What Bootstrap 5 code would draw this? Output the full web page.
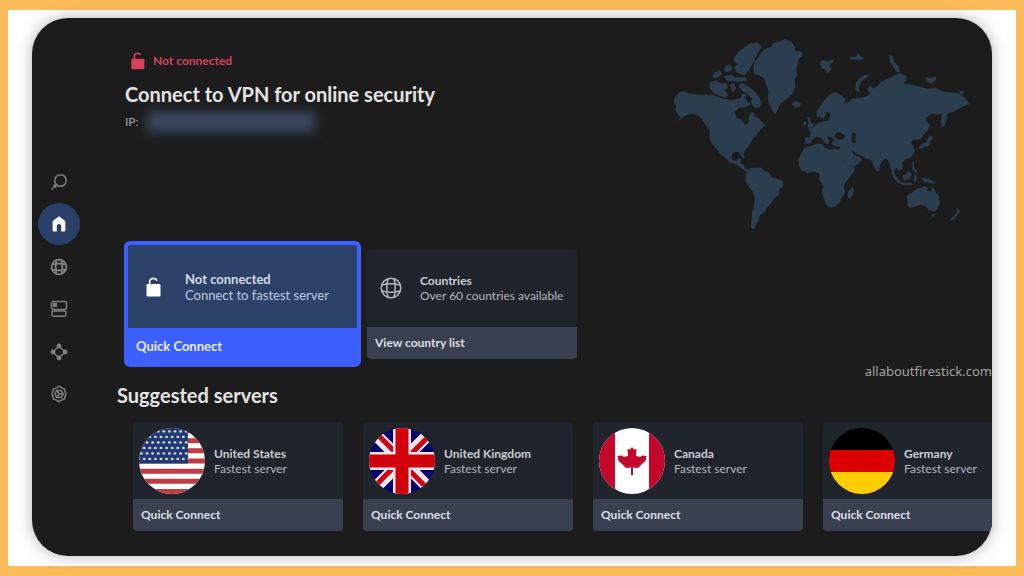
<!DOCTYPE html>
<html lang="en">
<head>
<meta charset="utf-8">
<meta name="viewport" content="width=device-width, initial-scale=1">
<title>VPN for TV</title>
<link href="https://cdn.jsdelivr.net/npm/bootstrap@5.3.0/dist/css/bootstrap.min.css" rel="stylesheet">
<style>
  body { font-family: Lato, "Open Sans", sans-serif; background: #fff; color: #e4e4e4; }
  .frame { min-height: 100vh; border: solid #fdbc59; border-width: 10px 8px; padding: 8px 24px 10px; background: #fff; }
  .panel { background: #1c1c1c; border-radius: 36px; box-shadow: 0 0 16px rgba(0,0,0,.3); }
  .rail { width: 54px; padding-top: 2px; }
  .rail-list { min-height: 254px; }
  .rail-link { width: 42px; height: 42px; color: #808080; }
  .rail-link.active { background: #2a4068; color: #fff; }
  .content { min-width: 0; padding-left: 31px; }
  .hero { padding: 20px 20px 10px 8px; }
  .hero-text { padding-top: 14px; }
  .status { color: #d8415a; font-size: 12px; line-height: 16px; padding-left: 6px; font-weight: 700; }
  .title { font-size: 20px; line-height: 24px; font-weight: 700; margin: 12px 0 6px; }
  .ip { font-size: 12px; line-height: 16px; color: #a5a5a5; }
  .ip-value { width: 168px; height: 20px; background: #3c4a63; filter: blur(6px); }
  .map { width: 300px; height: 193px; fill: #2a3e50; }
  .tile { width: 210px; background: #20242d; border-radius: 4px; font-size: 12px; line-height: 15px; color: #b3b6bc; }
  .tile-body { height: 77px; }
  .tile-title { color: #ccced2; font-weight: 700; }
  .tile-btn { height: 32px; border: 0; background: #394050; color: #dddfe4; font-size: 12px; font-weight: 700; line-height: 16px; padding: 0 8px; text-align: left; }
  .tile-selected { width: 237px; border: 4px solid #3e5fff; border-radius: 6px; background: #2c4269; font-size: 13px; line-height: 16px; color: #c0c9d9; }
  .tile-selected .tile-body { height: 83px; }
  .tile-selected .tile-title { color: #d3dae6; }
  .tile-selected .tile-btn { height: 35px; background: #3e5fff; font-size: 13px; color: #e6ebff; }
  .tile-selected .tile-icon { width: 57px; padding-left: 18px; }
  .tile-icon { width: 53px; padding-left: 13px; }
  .quick { padding-left: 7px; gap: 6px; }
  .suggest { height: 40px; }
  .suggest h2 { font-size: 20px; line-height: 24px; font-weight: 700; margin: 0; }
  .site { font-family: "Noto Sans", sans-serif; font-size: 13px; line-height: 8px; color: #a2a2a2; text-decoration: none; }
  .servers { gap: 20px; padding: 15px 0 25px 16px; }
  .flag { width: 66px; height: 66px; margin: 0 9px 0 6px; }
</style>
</head>
<body>
<div class="frame d-flex">
  <div class="panel d-flex flex-grow-1 overflow-hidden w-100">
    <nav class="rail flex-shrink-0 d-flex flex-column justify-content-center align-items-center" aria-label="Main">
      <div class="rail-list d-flex flex-column justify-content-between">
        <a class="rail-link rounded-circle d-flex align-items-center justify-content-center" href="#search" aria-label="Search">
          <svg width="18" height="18" viewBox="0 0 18 18" fill="none" stroke="currentColor" stroke-width="1.5" stroke-linecap="round"><circle cx="10.5" cy="7.5" r="5.8"/><path d="M6.2 11.8 2 16M4 12l2 2"/></svg></a>
        <a class="rail-link active rounded-circle d-flex align-items-center justify-content-center" href="#home" aria-label="Home" aria-current="page">
          <svg width="16" height="18" viewBox="0 0 16 18" fill="currentColor"><path d="M8 1.200 2.400 5.600Q1.600 6.300 1.600 7.500V15Q1.600 16.600 3.200 16.600H5.800V11Q5.800 9 8 9T10.200 11V16.600H12.800Q14.400 16.600 14.400 15V7.500Q14.400 6.300 13.600 5.600Z"/></svg></a>
        <a class="rail-link rounded-circle d-flex align-items-center justify-content-center" href="#countries" aria-label="Countries">
          <svg width="18" height="18" viewBox="0 0 18 18" fill="none" stroke="currentColor" stroke-width="1.8"><circle cx="9" cy="9" r="7.4"/><path d="M6.4 2Q4.8 9 6.4 16M11.600 2Q13.200 9 11.600 16M2 6.400Q9 4.800 16 6.400M2 11.600Q9 13.200 16 11.600"/></svg></a>
        <a class="rail-link rounded-circle d-flex align-items-center justify-content-center" href="#servers" aria-label="Servers">
          <svg width="18" height="18" viewBox="0 0 18 18" fill="none" stroke="currentColor" stroke-width="1.5"><rect x="1.5" y="1.5" width="15" height="8" rx="2"/><path d="M3.500 11Q2 11 2 12.500V14.500Q2 16.200 3.700 16.200H14.300Q16 16.200 16 14.500V12.500Q16 11 14.300 11Z"/><path d="M3 3H7V7H3Z" fill="currentColor" stroke="none"/></svg></a>
        <a class="rail-link rounded-circle d-flex align-items-center justify-content-center" href="#meshnet" aria-label="Meshnet">
          <svg width="18" height="18" viewBox="0 0 18 18" fill="currentColor" stroke="currentColor" stroke-width="1.400"><path fill="none" d="M9 3 15 9 9 15 3 9Z"/><circle cx="9" cy="3" r="1.700"/><circle cx="15" cy="9" r="1.700"/><circle cx="9" cy="15" r="1.700"/><circle cx="3" cy="9" r="1.700"/></svg></a>
        <a class="rail-link rounded-circle d-flex align-items-center justify-content-center" href="#settings" aria-label="Settings">
          <svg width="18" height="18" viewBox="0 0 18 18" fill="none" stroke="currentColor" stroke-width="1.500" stroke-linejoin="round"><path d="M9 1.200 11.500 2.900 14.500 4 15.200 6.800 16 9 15.200 11.200 14.500 14 11.500 15.100 9 16.800 6.500 15.100 3.500 14 2.800 11.200 2 9 2.800 6.800 3.500 4 6.500 2.900Z"/><path d="M6.800 5.400H11.200L13.200 9 11.200 12.600H6.800L4.800 9ZM6.800 5.400 9 9 6.800 12.600M9 9H13"/></svg></a>
      </div>
    </nav>

    <main class="content flex-grow-1">
      <header class="hero d-flex justify-content-between">
        <div class="hero-text">
          <div class="status d-flex align-items-center">
            <svg class="me-2" width="14" height="18" viewBox="0 0 14 18"><path d="M3.4 8V4.6Q3.4 1.4 6.8 1.4 9 1.4 9.8 3" fill="none" stroke="currentColor" stroke-width="1.6"/><rect x=".4" y="6.8" width="13" height="10.4" rx="1" fill="currentColor"/></svg>
            <span>Not connected</span>
          </div>
          <h1 class="title">Connect to VPN for online security</h1>
          <div class="ip d-flex align-items-center gap-2"><span>IP:</span><span class="ip-value" aria-label="Hidden address"></span></div>
        </div>
        <svg class="map flex-shrink-0" viewBox="40 40 900 580" role="img" aria-label="World map">
          <!-- North America -->
          <path d="M50 214 62 203 78 200 88 206 112 210 132 212 156 210 178 218 200 224 222 226 244 220 250 208 262 206 260 222 268 236 262 248 240 250 228 262 232 278 248 286 258 300 268 298 270 280 276 262 284 264 290 276 302 282 308 292 322 302 308 312 298 324 292 334 280 346 272 362 262 376 254 388 258 398 252 402 242 384 228 382 218 392 220 406 232 410 240 400 248 404 244 416 254 420 258 432 270 436 262 442 248 432 232 420 212 414 202 402 184 388 172 372 158 356 152 338 152 318 140 300 130 284 116 272 98 268 82 272 68 282 58 290 64 278 54 268 48 254 52 244 44 234Z"/>
          <path d="M228 96 240 82 256 68 276 56 296 54 310 66 300 80 292 94 286 108 278 124 268 140 258 152 244 148 232 142 226 128 236 118 224 110Z"/>
          <path d="M150 188 156 172 172 168 186 176 204 176 206 190 196 196 210 208 200 220 184 214 166 206ZM160 156 168 142 184 138 190 148 180 158 168 162ZM196 130 210 118 222 130 214 140 200 142ZM196 156 216 150 230 158 260 158 266 168 240 172 220 168 206 172ZM212 180 226 176 232 190 222 204ZM238 182 252 176 272 188 288 200 300 216 308 234 302 250 286 248 276 236 280 222 262 206 248 196ZM254 236 270 232 276 240 262 246Z"/>
          <!-- Greenland and Iceland -->
          <path d="M284 128 288 110 298 100 306 84 320 72 338 66 346 54 364 50 380 43 398 52 410 66 408 78 430 82 432 92 418 104 420 118 412 132 416 150 408 166 410 186 402 206 386 222 368 234 358 252 350 270 340 258 332 240 328 220 330 200 322 180 316 162 300 152 286 150ZM400 236 412 230 426 236 424 246 412 250 402 244Z"/>
          <!-- South America -->
          <path d="M262 444 272 432 290 430 308 430 318 440 332 446 340 460 358 464 374 472 372 486 362 496 360 512 346 522 338 536 326 548 318 562 304 572 300 588 290 600 286 616 276 608 278 588 280 566 286 544 288 520 282 502 270 488 260 470Z"/>
          <!-- Africa -->
          <path d="M438 370 452 366 472 358 492 358 496 368 514 376 530 372 544 378 550 394 560 412 570 426 588 430 586 442 572 460 560 474 556 490 560 504 550 520 542 536 530 546 512 550 502 540 496 522 490 504 494 484 482 466 482 448 468 442 448 446 430 438 420 422 420 404 428 386ZM582 488 586 500 580 516 572 524 566 514 570 498Z"/>
          <!-- Europe and Asia -->
          <path fill-rule="evenodd" d="M440 356 438 338 454 338 456 320 446 314 462 308 476 296 496 290 510 288 516 270 504 260 500 274 494 284 486 276 474 278 474 262 484 244 500 224 514 208 530 202 546 212 562 224 556 236 572 232 584 222 604 220 622 216 634 208 626 190 636 182 644 192 654 188 666 172 684 164 704 154 722 146 740 152 744 164 736 178 758 180 782 186 806 192 832 190 852 200 876 204 900 206 920 220 934 238 918 244 902 252 886 262 868 266 864 284 858 304 850 308 846 290 852 268 838 270 820 268 804 278 802 290 814 300 808 318 796 330 788 342 776 346 764 346 756 354 766 370 768 384 758 398 740 406 730 416 734 432 724 440 712 430 706 442 714 460 706 456 700 440 692 416 684 402 674 406 664 422 662 438 654 442 646 426 638 406 622 402 608 394 592 386 578 376 586 392 600 396 610 404 600 418 582 428 568 426 558 408 546 392 540 378 544 366 532 366 518 358 526 348 520 340 506 336 512 350 508 360 498 354 486 340 476 336 462 344 454 358ZM528 330 538 322 550 328 560 334 554 344 538 346 530 340ZM584 322 592 330 588 344 594 354 584 356 578 344 580 334Z"/>
          <!-- Northern islands -->
          <path d="M484 112 496 106 508 110 522 104 524 114 514 120 518 134 506 146 498 134 488 130ZM572 96 590 98 600 84 606 96 620 100 604 106 592 106 576 104ZM692 92 702 94 708 112 720 124 724 142 714 142 704 126 694 114ZM590 196 592 176 604 160 620 150 634 152 620 162 608 172 600 188 602 204ZM802 158 816 160 832 158 834 168 818 176 804 172ZM902 200 914 198 916 206 906 210Z"/>
          <path d="M444 276 452 278 456 292 466 300 460 308 446 310 450 296ZM434 292 442 290 442 302 434 304Z"/>
          <!-- Japan and South East Asia -->
          <path d="M814 332 824 338 816 350 812 364 798 366 784 374 780 368 792 358 804 352ZM762 408 768 416 766 428 776 440 772 446 762 434ZM698 444 710 452 722 466 732 474 760 476 764 482 738 482 718 476 706 462ZM730 454 744 448 752 438 760 450 752 464 738 468ZM766 454 776 450 774 470 766 470ZM788 460 802 462 818 466 832 478 816 476 800 474Z"/>
          <!-- Australia and New Zealand -->
          <path d="M744 514 760 506 772 494 786 490 796 486 808 490 806 500 818 502 822 486 832 504 842 518 844 532 838 550 828 562 812 558 800 544 784 542 768 546 754 552 746 544 748 530ZM820 568 830 568 828 578 822 578ZM896 552 906 562 896 574 884 588 874 588 884 576 894 566Z"/>
        </svg>
      </header>

      <section class="quick d-flex align-items-center" aria-label="Quick actions">
        <article class="tile tile-selected flex-shrink-0 overflow-hidden d-flex flex-column">
          <div class="tile-body d-flex align-items-center">
            <div class="tile-icon text-white flex-shrink-0"><svg width="15" height="20" viewBox="0 0 15 20"><path d="M3.6 9V5.2Q3.6 1.4 7.4 1.4 10 1.4 11 3.6" fill="none" stroke="currentColor" stroke-width="1.6"/><rect x=".5" y="7" width="14" height="12.4" rx="1" fill="currentColor"/></svg></div>
            <div><div class="tile-title">Not connected</div><div>Connect to fastest server</div></div>
          </div>
          <button class="tile-btn" type="button">Quick Connect</button>
        </article>
        <article class="tile flex-shrink-0 overflow-hidden d-flex flex-column">
          <div class="tile-body d-flex align-items-center">
            <div class="tile-icon flex-shrink-0"><svg width="22" height="22" viewBox="0 0 22 22" fill="none" stroke="currentColor" stroke-width="1.5"><circle cx="11" cy="11" r="9.8"/><path d="M8 1.8Q5.6 11 8 20.2M14 1.8Q16.4 11 14 20.2M1.8 8Q11 5.6 20.2 8M1.8 14Q11 16.4 20.2 14"/></svg></div>
            <div><div class="tile-title">Countries</div><div class="text-nowrap">Over 60 countries available</div></div>
          </div>
          <button class="tile-btn" type="button">View country list</button>
        </article>
      </section>

      <div class="suggest d-flex justify-content-between">
        <h2 class="align-self-end">Suggested servers</h2>
        <a class="site align-self-start" href="#site">allaboutfirestick.com</a>
      </div>

      <section class="servers d-flex" aria-label="Suggested servers">
        <article class="tile flex-shrink-0 overflow-hidden d-flex flex-column">
          <div class="tile-body d-flex align-items-center">
            <svg class="flag rounded-circle flex-shrink-0" viewBox="0 0 66 66" role="img" aria-label="Flag of the United States">
              <defs><pattern id="stars" width="5.6" height="11" patternUnits="userSpaceOnUse" x="1" y="1"><circle cx="1.4" cy="2.4" r="1.2" fill="#fff"/><circle cx="4.2" cy="7.9" r="1.2" fill="#fff"/></pattern></defs>
              <rect width="66" height="66" fill="#fff"/>
              <path d="M0 2.5H66M0 12.7H66M0 22.8H66M0 33H66M0 43.2H66M0 53.3H66M0 63.5H66" stroke="#bd3d44" stroke-width="5"/>
              <rect width="49" height="35.5" fill="#223a74"/><rect width="49" height="34" fill="url(#stars)"/>
            </svg>
            <div><div class="tile-title">United States</div><div>Fastest server</div></div>
          </div>
          <button class="tile-btn" type="button">Quick Connect</button>
        </article>
        <article class="tile flex-shrink-0 overflow-hidden d-flex flex-column">
          <div class="tile-body d-flex align-items-center">
            <svg class="flag rounded-circle flex-shrink-0" viewBox="0 0 66 66" role="img" aria-label="Flag of the United Kingdom">
              <rect width="66" height="66" fill="#00006b"/>
              <path d="M0 0 66 66M66 0 0 66" stroke="#f3e6ee" stroke-width="12"/>
              <path d="M2 0 33 31M64 4 35 33M64 66 33 35M2 62 31 33" stroke="#d0000c" stroke-width="5"/>
              <path d="M33 0V66M0 33H66" stroke="#f3e6ee" stroke-width="18"/>
              <path d="M33 0V66M0 33H66" stroke="#d0000c" stroke-width="13"/>
            </svg>
            <div><div class="tile-title">United Kingdom</div><div>Fastest server</div></div>
          </div>
          <button class="tile-btn" type="button">Quick Connect</button>
        </article>
        <article class="tile flex-shrink-0 overflow-hidden d-flex flex-column">
          <div class="tile-body d-flex align-items-center">
            <svg class="flag rounded-circle flex-shrink-0" viewBox="0 0 66 66" role="img" aria-label="Flag of Canada">
              <rect width="66" height="66" fill="#fff"/>
              <path d="M0 0H16V66H0ZM50 0H66V66H50Z" fill="#c4082c"/>
              <path d="M33 19 35 21.500 37.500 21 37 28 41.500 29 43 27.500 47.500 28 46.500 33 43 36 39 40 34 39.500V47H32V39.500L27 40 23 36 19.500 33 18.500 28 23 27.500 24.500 29 29 28 28.500 21 31 21.500Z" fill="#c4082c"/>
            </svg>
            <div><div class="tile-title">Canada</div><div>Fastest server</div></div>
          </div>
          <button class="tile-btn" type="button">Quick Connect</button>
        </article>
        <article class="tile flex-shrink-0 overflow-hidden d-flex flex-column">
          <div class="tile-body d-flex align-items-center">
            <svg class="flag rounded-circle flex-shrink-0" viewBox="0 0 66 66" role="img" aria-label="Flag of Germany">
              <rect width="66" height="22" fill="#000"/><rect y="22" width="66" height="22" fill="#dd0000"/><rect y="44" width="66" height="22" fill="#ffce00"/>
            </svg>
            <div><div class="tile-title">Germany</div><div>Fastest server</div></div>
          </div>
          <button class="tile-btn" type="button">Quick Connect</button>
        </article>
      </section>
    </main>
  </div>
</div>
<script src="https://cdn.jsdelivr.net/npm/bootstrap@5.3.0/dist/js/bootstrap.bundle.min.js"></script>
</body>
</html>
